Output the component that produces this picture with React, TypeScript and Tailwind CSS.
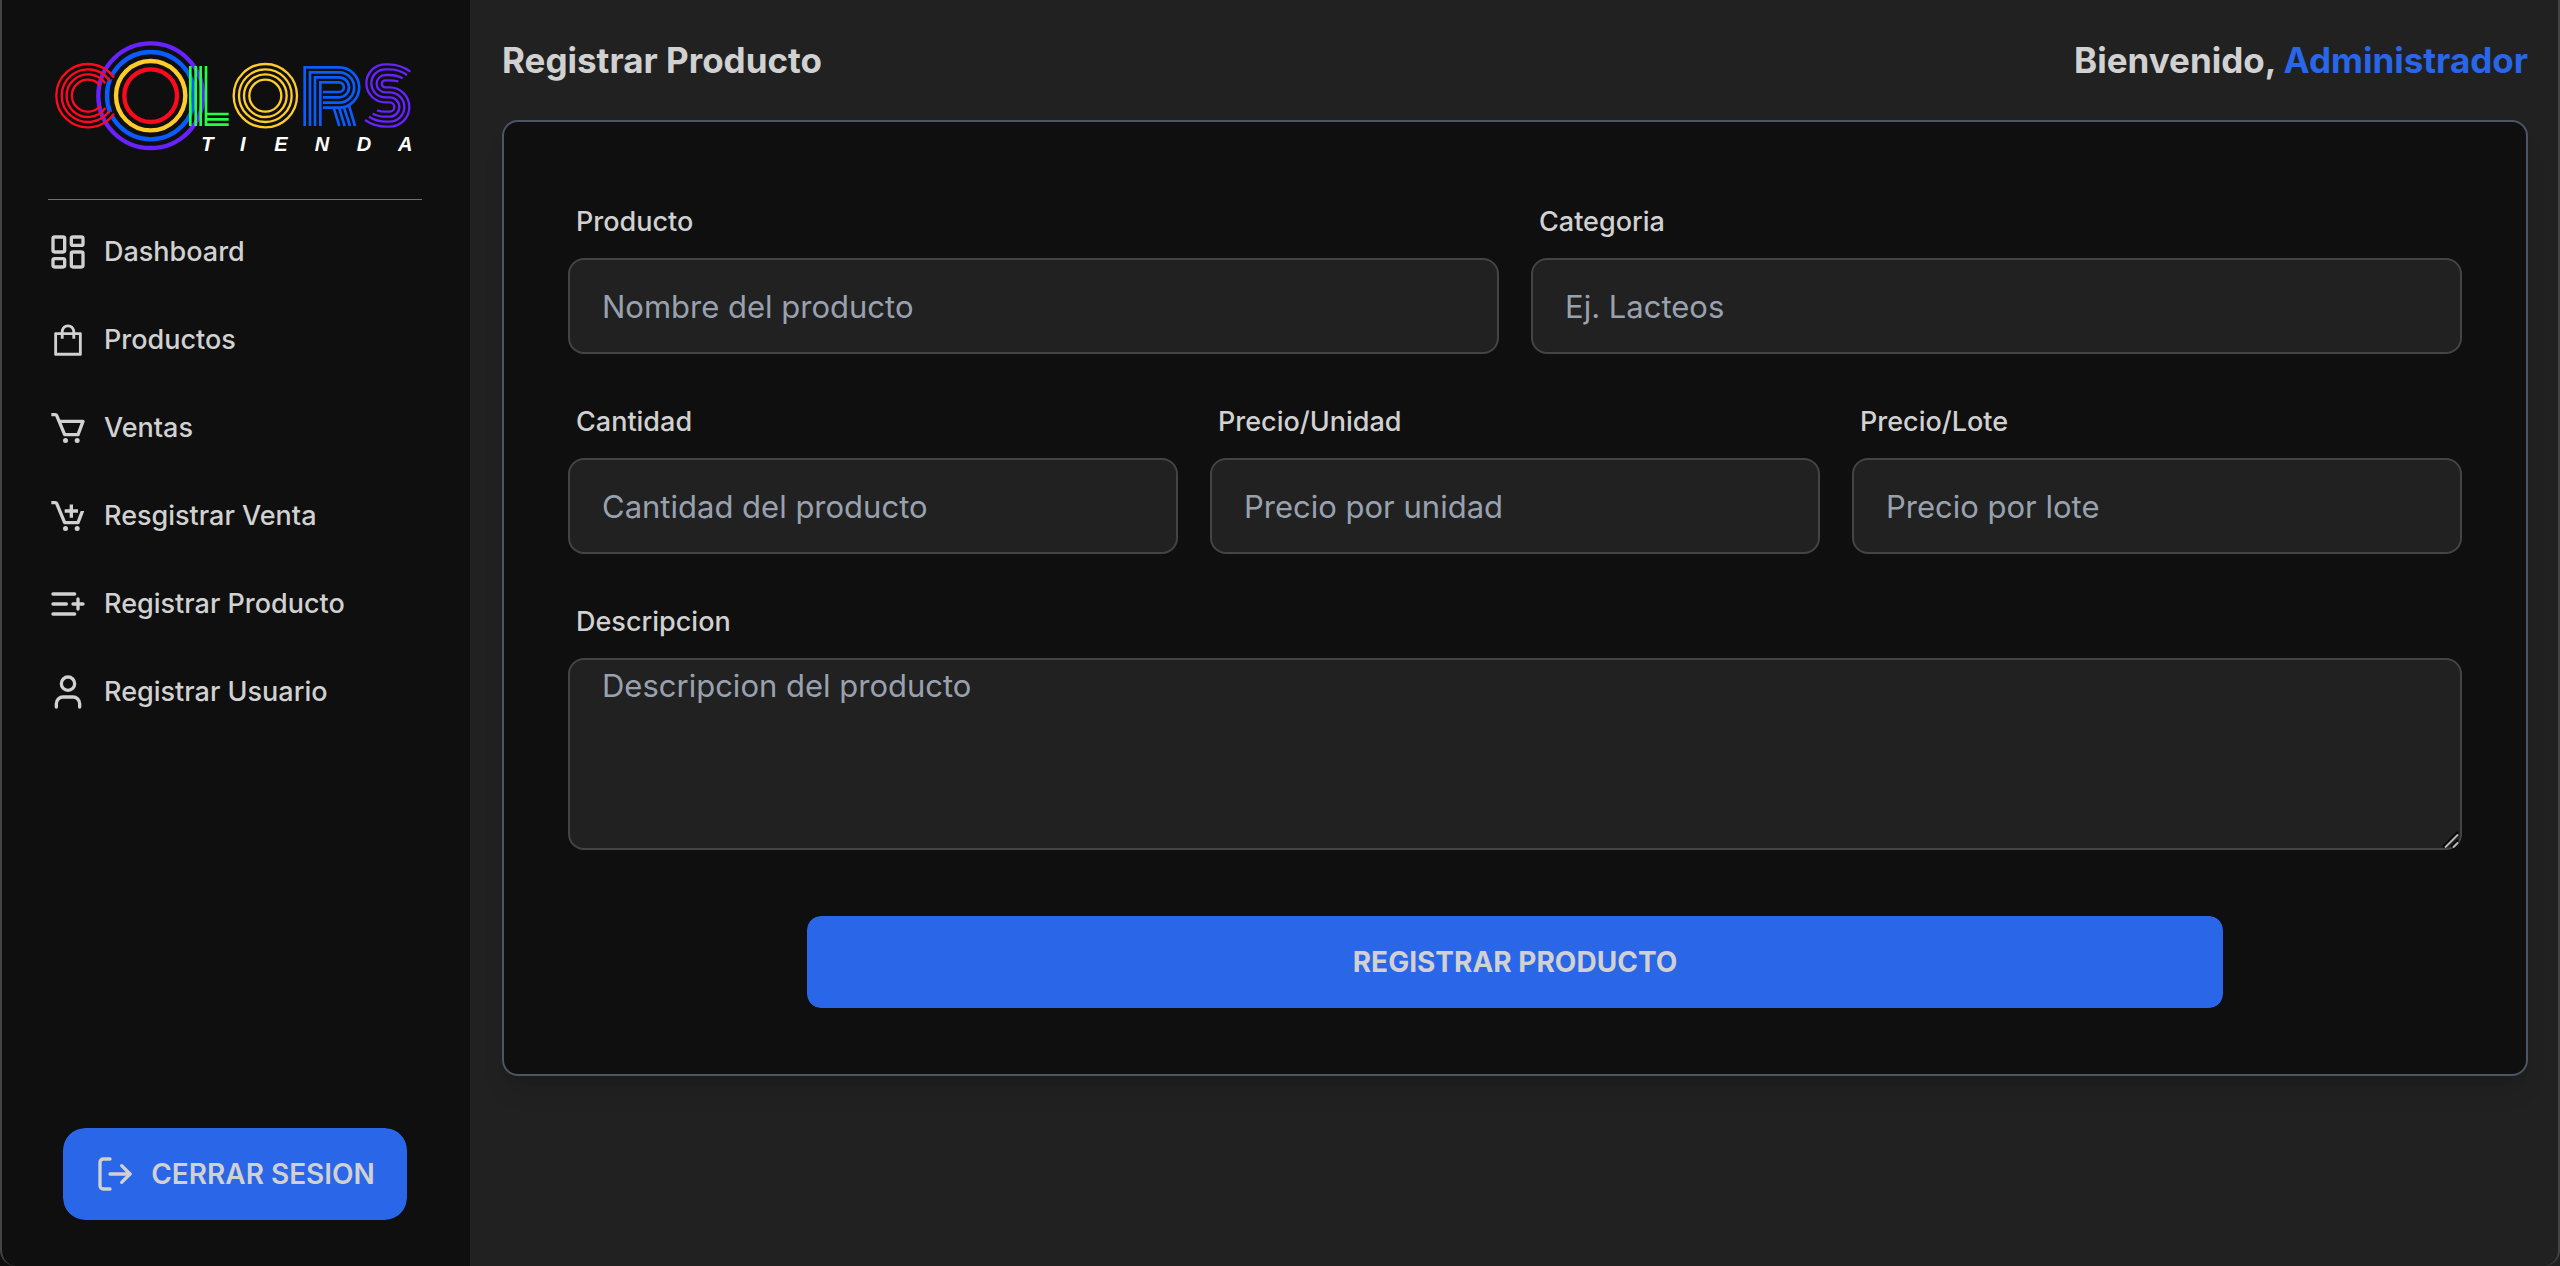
import type { ReactNode } from "react";
import { AiOutlineShopping } from "react-icons/ai";
import { BiCart, BiCartAdd } from "react-icons/bi";
import { LayoutDashboard, LogOut, User } from "lucide-react";

function Logo() {
  return (
    <svg viewBox="54 60 1122 357" className="w-full" role="img" aria-label="Colors Tienda" fill="none">
      <g strokeWidth="13">
        <circle cx="362" cy="227" r="157" stroke="#6622ff" />
        <circle cx="362" cy="227" r="131" stroke="#0a5cff" />
        <circle cx="362" cy="227" r="104" stroke="#ffcc2b" />
        <circle cx="362" cy="227" r="79" stroke="#ff0a1c" />
      </g>
      {/* Dark band that keeps the open C clear of the rings behind it */}
      <path d="M232 150A95 95 0 0 1 246 178M246 276A95 95 0 0 1 232 304" stroke="#0f0f0f" strokeWidth="10" />
      <g stroke="#ff0a1c" strokeWidth="7">
        <path d="M252 173A95 95 0 1 0 252 281" />
        <path d="M239 182A79 79 0 1 0 239 272" />
        <path d="M226 190A64 64 0 1 0 226 264" />
        <path d="M212 198A48 48 0 1 0 212 256" />
      </g>
      <g stroke="#22ff44" strokeWidth="8">
        <path d="M481 138V318M497 138V318M512 138V318M528 138V318" />
        <path d="M528 282H596M528 298H596M528 314H596" />
      </g>
      <g stroke="#ffcc2b" strokeWidth="7">
        <circle cx="706" cy="227" r="95" />
        <circle cx="706" cy="227" r="79" />
        <circle cx="706" cy="227" r="64" />
        <circle cx="706" cy="227" r="48" />
      </g>
      <g stroke="#0a5cff" strokeWidth="8">
        <path d="M824 318V142H927A60 60 0 0 1 927 263H879" />
        <path d="M840 318V157H927A45 45 0 0 1 927 248H879" />
        <path d="M855 318V172H927A30 30 0 0 1 927 232H879" />
        <path d="M871 318V187H927A14 14 0 0 1 927 216H879" />
        <path d="M911 263L928 318M927 263L944 318M942 263L960 318M957 257L975 318" />
      </g>
      <g stroke="#6622ff" strokeWidth="7">
        <path d="M1141 155Q1112 133 1076 133H1066A57 57 0 0 0 1066 247H1079A14 14 0 0 1 1079 275H1066Q1052 275 1041 271" />
        <path d="M1131 165Q1108 148 1076 148H1066A42 42 0 0 0 1066 232H1079A29 29 0 0 1 1079 290H1070Q1045 290 1028 281" />
        <path d="M1118 175Q1100 165 1076 165H1066A26 26 0 0 0 1066 217H1079A44 44 0 0 1 1079 305H1070Q1040 305 1017 290" />
        <path d="M1105 184Q1090 181 1076 181H1066A10 10 0 0 0 1066 202H1079A59 59 0 0 1 1079 320H1070Q1033 320 1005 300" />
      </g>
      <text fill="#ffffff" fontFamily="Liberation Sans" fontStyle="italic" fontWeight="700" fontSize="60" y="394">
        <tspan x="514">T</tspan>
        <tspan x="630">I</tspan>
        <tspan x="733">E</tspan>
        <tspan x="854">N</tspan>
        <tspan x="980">D</tspan>
        <tspan x="1104">A</tspan>
      </text>
    </svg>
  );
}

function ListPlusIcon() {
  return (
    <svg viewBox="0 0 24 24" className="size-10" fill="none" stroke="currentColor" strokeWidth="2" strokeLinecap="round" strokeLinejoin="round">
      <path d="M11 12H3M16 6H3M16 18H3M18 9v6M21 12h-6" />
    </svg>
  );
}

const links: { label: string; icon: ReactNode }[] = [
  { label: "Dashboard", icon: <LayoutDashboard className="size-10" /> },
  { label: "Productos", icon: <AiOutlineShopping className="size-10" /> },
  { label: "Ventas", icon: <BiCart className="size-10" /> },
  { label: "Resgistrar Venta", icon: <BiCartAdd className="size-10" /> },
  { label: "Registrar Producto", icon: <ListPlusIcon /> },
  { label: "Registrar Usuario", icon: <User className="size-10" /> },
];

const fieldClass =
  "block w-full rounded-2xl border-2 border-[#444444] bg-[#212121] px-8 text-[31px] leading-[48px] text-[#d1d1d1] placeholder:text-gray-400 placeholder:opacity-100 outline-none focus:border-[#2966e8]";

function Field({ id, label, placeholder, multiline }: { id: string; label: string; placeholder: string; multiline?: boolean }) {
  return (
    <div className="flex-1">
      <label htmlFor={id} className="mb-4 block px-2 text-[27px] leading-10 font-medium">
        {label}
      </label>
      {multiline ? (
        <div className="relative">
          <textarea
            id={id}
            placeholder={placeholder}
            className={`${fieldClass} h-48 resize-y pt-0.5 [&::-webkit-resizer]:hidden`}
          />
          <svg viewBox="0 0 18 18" className="pointer-events-none absolute right-0.5 bottom-0.5 size-[18px]" fill="none">
            <path d="M1 17L16 2M9 17L16 10" stroke="#000000" strokeWidth="2" />
            <path d="M3 17.5L16 4.5M11 17.5L16 12.5" stroke="#b5b5b5" strokeWidth="2" />
          </svg>
        </div>
      ) : (
        <input id={id} type="text" placeholder={placeholder} className={`${fieldClass} h-24`} />
      )}
    </div>
  );
}

export default function App() {
  return (
    <div className="relative flex min-h-screen bg-[#212121] font-['Inter',sans-serif] text-[#d1d1d1]">
      <aside className="flex w-[470px] shrink-0 flex-col bg-[#0f0f0f] px-12 pt-10 pb-11">
        <Logo />
        <hr className="mt-10 mb-2 border-t border-gray-500" />
        <nav className="flex flex-1 flex-col">
          {links.map((l) => (
            <a key={l.label} href="#" className="flex items-center gap-4 py-6 text-[27px] leading-10 font-medium whitespace-nowrap">
              {l.icon}
              {l.label}
            </a>
          ))}
        </nav>
        <button
          type="button"
          className="flex h-24 items-center gap-4 self-center rounded-3xl border-2 border-[#0f0f0f] bg-[#2966e8] bg-clip-padding px-8 text-[28px] leading-10 font-semibold whitespace-nowrap"
        >
          <LogOut className="size-10" />
          CERRAR SESION
        </button>
      </aside>

      <main className="min-w-0 flex-1 px-8">
        <header className="flex items-center justify-between py-8 text-[35px] leading-[56px] font-bold">
          <h1>Registrar Producto</h1>
          <p>
            Bienvenido, <span className="text-[#2966e8]">Administrador</span>
          </p>
        </header>
        <form className="flex flex-col gap-12 rounded-2xl border-2 border-gray-600 bg-[#0f0f0f] px-16 pt-20 pb-16 shadow-xl">
          <div className="flex gap-8">
            <Field id="producto" label="Producto" placeholder="Nombre del producto" />
            <Field id="categoria" label="Categoria" placeholder="Ej. Lacteos" />
          </div>
          <div className="flex gap-8">
            <Field id="cantidad" label="Cantidad" placeholder="Cantidad del producto" />
            <Field id="precio-unidad" label="Precio/Unidad" placeholder="Precio por unidad" />
            <Field id="precio-lote" label="Precio/Lote" placeholder="Precio por lote" />
          </div>
          <Field id="descripcion" label="Descripcion" placeholder="Descripcion del producto" multiline />
          <button
            type="button"
            className="mt-4 h-24 w-3/4 self-center rounded-2xl border-2 border-[#0f0f0f] bg-[#2966e8] bg-clip-padding text-[28px] leading-10 font-bold"
          >
            REGISTRAR PRODUCTO
          </button>
        </form>
      </main>
      <div className="pointer-events-none absolute inset-0 rounded-b-2xl border-x-2 border-[#444444]" />
    </div>
  );
}
